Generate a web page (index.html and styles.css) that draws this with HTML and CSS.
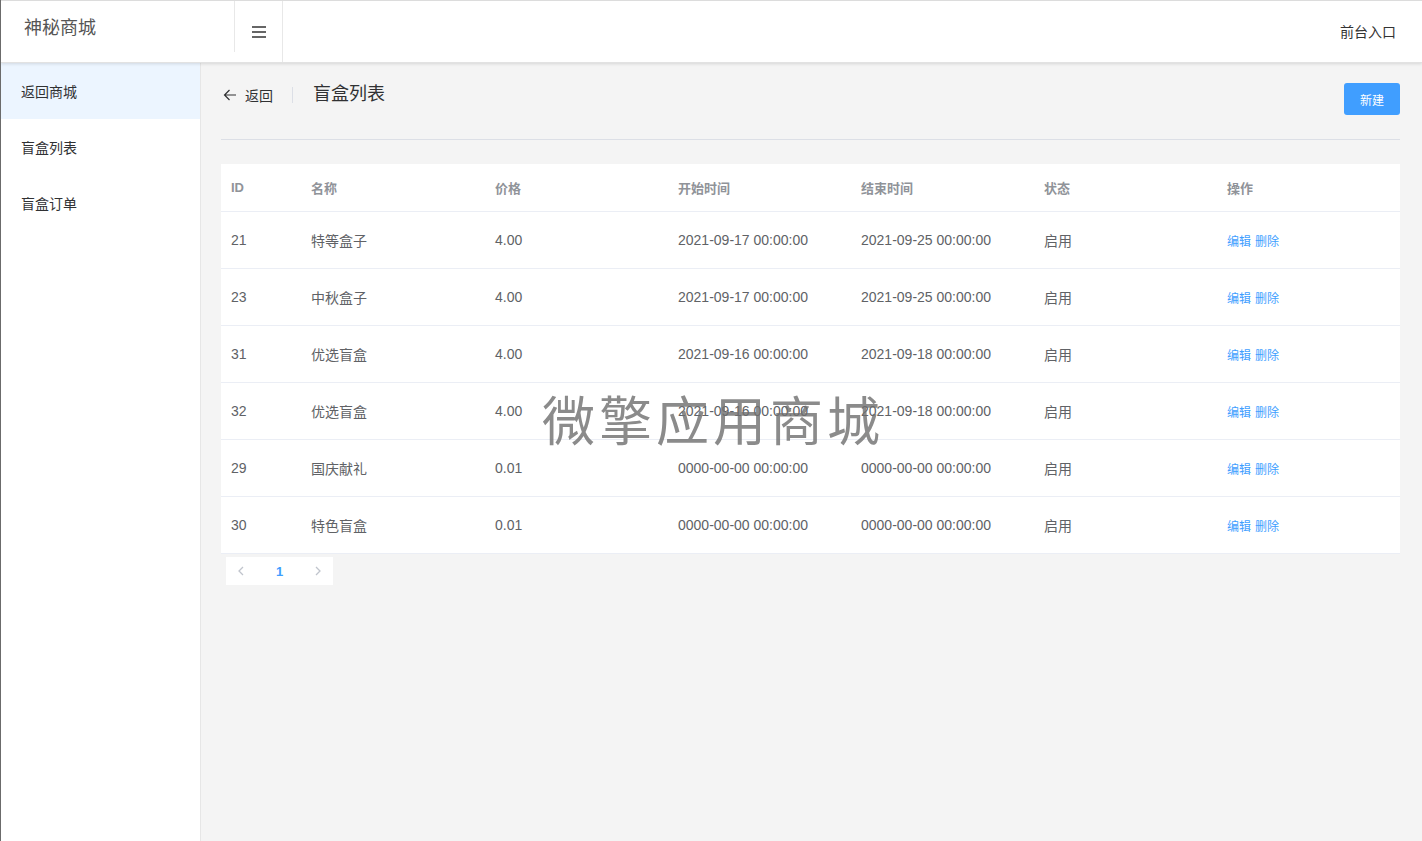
FILE: index.html
```html
<!DOCTYPE html>
<html lang="zh-CN">
<head>
    <meta charset="UTF-8">
    <meta name="viewport" content="width=device-width, initial-scale=1.0">
    <title>盲盒列表 - 神秘商城</title>
    <link rel="stylesheet" href="styles.css">
</head>
<body>
    <div class="app">
        <header class="topbar">
            <div class="logo">神秘商城</div>
            <div class="toggle">
                <svg width="14" height="12" viewBox="0 0 14 12"><rect x="0" y="0" width="14" height="2" fill="#666"/><rect x="0" y="5" width="14" height="2" fill="#666"/><rect x="0" y="10" width="14" height="2" fill="#666"/></svg>
            </div>
            <div class="spacer"></div>
            <a class="front-link">前台入口</a>
        </header>

        <div class="layout">
            <aside class="sidebar">
                <a class="menu-item active">返回商城</a>
                <a class="menu-item">盲盒列表</a>
                <a class="menu-item">盲盒订单</a>
            </aside>

            <main class="main">
                <div class="page-header">
                    <div class="back">
                        <svg width="14" height="14" viewBox="0 0 14 14"><path d="M13 7H1.5M6.5 2 1.5 7l5 5" fill="none" stroke="#303133" stroke-width="1.2"/></svg>
                        <span>返回</span>
                    </div>
                    <div class="sep"></div>
                    <div class="title">盲盒列表</div>
                    <div class="spacer"></div>
                    <button class="btn-primary">新建</button>
                </div>
                <div class="divider"></div>

                <table class="table">
                    <colgroup>
                        <col class="col-id">
                        <col class="col-name">
                        <col><col><col><col><col>
                    </colgroup>
                    <thead>
                        <tr>
                            <th>ID</th>
                            <th>名称</th>
                            <th>价格</th>
                            <th>开始时间</th>
                            <th>结束时间</th>
                            <th>状态</th>
                            <th>操作</th>
                        </tr>
                    </thead>
                    <tbody>
                        <tr><td>21</td><td>特等盒子</td><td>4.00</td><td>2021-09-17 00:00:00</td><td>2021-09-25 00:00:00</td><td>启用</td><td class="ops"><a>编辑</a> <a>删除</a></td></tr>
                        <tr><td>23</td><td>中秋盒子</td><td>4.00</td><td>2021-09-17 00:00:00</td><td>2021-09-25 00:00:00</td><td>启用</td><td class="ops"><a>编辑</a> <a>删除</a></td></tr>
                        <tr><td>31</td><td>优选盲盒</td><td>4.00</td><td>2021-09-16 00:00:00</td><td>2021-09-18 00:00:00</td><td>启用</td><td class="ops"><a>编辑</a> <a>删除</a></td></tr>
                        <tr><td>32</td><td>优选盲盒</td><td>4.00</td><td>2021-09-16 00:00:00</td><td>2021-09-18 00:00:00</td><td>启用</td><td class="ops"><a>编辑</a> <a>删除</a></td></tr>
                        <tr><td>29</td><td>国庆献礼</td><td>0.01</td><td>0000-00-00 00:00:00</td><td>0000-00-00 00:00:00</td><td>启用</td><td class="ops"><a>编辑</a> <a>删除</a></td></tr>
                        <tr><td>30</td><td>特色盲盒</td><td>0.01</td><td>0000-00-00 00:00:00</td><td>0000-00-00 00:00:00</td><td>启用</td><td class="ops"><a>编辑</a> <a>删除</a></td></tr>
                    </tbody>
                </table>

                <div class="pager">
                    <span class="pager-btn">
                        <svg width="8" height="10" viewBox="0 0 8 10"><path d="M6 1 2 5l4 4" fill="none" stroke="#c0c4cc" stroke-width="1.3"/></svg>
                    </span>
                    <span class="pager-num">1</span>
                    <span class="pager-btn">
                        <svg width="8" height="10" viewBox="0 0 8 10"><path d="M2 1l4 4-4 4" fill="none" stroke="#c0c4cc" stroke-width="1.3"/></svg>
                    </span>
                </div>
            </main>
        </div>
    </div>

    <div class="watermark">微擎应用商城</div>
</body>
</html>
```

FILE: styles.css
```css
body {
    margin: 0;
    font-family: "Liberation Sans", Arial, "Noto Sans CJK SC", sans-serif;
    font-size: 14px;
    color: #303133;
    background-color: #f4f4f4;
    border-left: 1px solid #6b6b6b;
    height: 100vh;
    box-sizing: border-box;
    overflow: hidden;
}

.app {
    display: flex;
    flex-direction: column;
    height: 100%;
}

.topbar {
    display: flex;
    align-items: stretch;
    height: 61px;
    border-top: 1px solid #dcdcdc;
    border-bottom: 1px solid #e2e2e2;
    background-color: #fff;
    box-shadow: 0 1px 3px rgba(0, 0, 0, 0.12);
    position: relative;
    z-index: 2;
}

.logo {
    width: 234px;
    box-sizing: border-box;
    padding-left: 23px;
    padding-top: 12px;
    font-size: 18px;
    color: #555;
    border-right: 1px solid #e8e8e8;
    margin-bottom: 10px;
}

.toggle {
    width: 47px;
    display: flex;
    align-items: center;
    justify-content: center;
    border-right: 1px solid #e8e8e8;
}

.spacer {
    flex: 1;
}

.front-link {
    padding: 20px 26px 0 0;
    font-size: 14px;
    color: #333;
}

.layout {
    flex: 1;
    display: flex;
    min-height: 0;
}

.sidebar {
    width: 199px;
    background-color: #fff;
    border-right: 1px solid #e6e6e6;
    display: flex;
    flex-direction: column;
}

.menu-item {
    height: 56px;
    line-height: 58px;
    padding-left: 20px;
    font-size: 14px;
    color: #303133;
}

.menu-item.active {
    background-color: #ecf5ff;
}

.main {
    flex: 1;
    padding: 20px 22px 0 20px;
}

.page-header {
    display: flex;
    align-items: flex-start;
    height: 32px;
}

.back {
    display: flex;
    align-items: center;
    gap: 8px;
    height: 24px;
    padding-left: 2px;
    font-size: 14px;
    color: #303133;
}

.sep {
    width: 1px;
    height: 16px;
    margin: 4px 20px 0 19px;
    background-color: #dcdfe6;
}

.title {
    font-size: 18px;
    line-height: 22px;
    color: #303133;
}

.btn-primary {
    width: 56px;
    height: 32px;
    border: none;
    border-radius: 3px;
    background-color: #409eff;
    color: #fff;
    font-family: inherit;
    font-size: 12px;
    cursor: pointer;
}

.divider {
    height: 1px;
    background-color: #dcdfe6;
    margin: 24px 0;
}

.table {
    width: 100%;
    border-collapse: collapse;
    table-layout: fixed;
    background-color: #fff;
}

.col-id {
    width: 80px;
}

.col-name {
    width: 184px;
}

.table th,
.table td {
    text-align: left;
    padding: 0 10px;
    border-bottom: 1px solid #ebeef5;
}

.table th {
    height: 47px;
    font-size: 13px;
    font-weight: bold;
    color: #909399;
}

.table td {
    height: 56px;
    font-size: 14px;
    color: #606266;
}

.ops a {
    font-size: 12px;
    color: #409eff;
    cursor: pointer;
}

.pager {
    display: inline-flex;
    align-items: center;
    height: 28px;
    margin: 3px 0 0 5px;
    background-color: #fff;
}

.pager-btn {
    width: 30px;
    display: flex;
    justify-content: center;
    align-items: center;
}

.pager-num {
    width: 47px;
    text-align: center;
    font-size: 13px;
    font-weight: bold;
    color: #409eff;
}

.watermark {
    position: fixed;
    left: 4px;
    right: 0;
    top: 380px;
    text-align: center;
    font-family: "Noto Sans CJK SC", sans-serif;
    font-size: 53px;
    letter-spacing: 4px;
    color: rgba(110, 110, 110, 0.8);
    pointer-events: none;
    z-index: 5;
}
```
